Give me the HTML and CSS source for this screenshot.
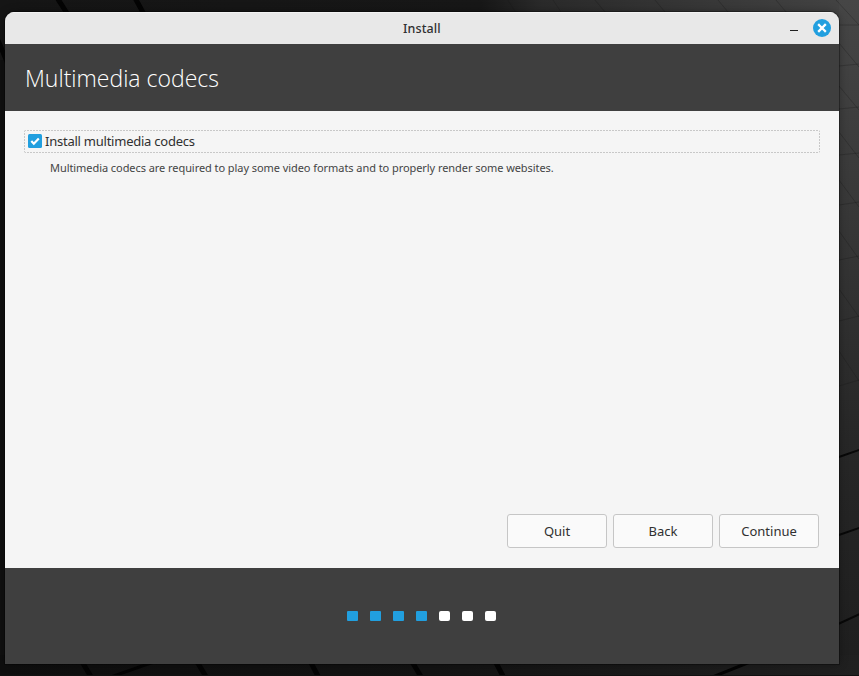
FILE: index.html
```
<!DOCTYPE html>
<html lang="en">
<head>
<meta charset="utf-8">
<title>Install</title>
<link rel="stylesheet" href="styles.css">
</head>
<body>
<svg class="wallpaper" viewBox="0 0 859 676" aria-hidden="true">
  <defs>
    <linearGradient id="top" x1="0" x2="1" y1="0" y2="0">
      <stop offset="0" stop-color="#151515"/><stop offset=".56" stop-color="#171717"/>
      <stop offset=".63" stop-color="#2a2a2a"/><stop offset="1" stop-color="#444"/>
    </linearGradient>
    <linearGradient id="side" x1="0" x2="0" y1="0" y2="1">
      <stop offset="0" stop-color="#464646"/><stop offset=".3" stop-color="#383838"/>
      <stop offset=".65" stop-color="#272727"/><stop offset="1" stop-color="#1e1e1e"/>
    </linearGradient>
    <linearGradient id="bottom" x1="0" x2="1" y1="0" y2="0">
      <stop offset="0" stop-color="#0e0e0e"/><stop offset=".5" stop-color="#131313"/><stop offset="1" stop-color="#202020"/>
    </linearGradient>
  </defs>
  <rect width="859" height="676" fill="#101010"/>
  <rect width="859" height="60" fill="url(#top)"/>
  <rect x="839" width="20" height="676" fill="url(#side)"/>
  <rect y="655" width="859" height="21" fill="url(#bottom)"/>
  <g stroke="#040404" stroke-width="5">
    <path d="M56 -4L70 18M134 -4L146 18M-3 38L8 64" />
    <path d="M78 655L93 680M193 655L208 680M307 655L320 680M408 655L423 680M492 655L505 680" />
    <path stroke-width="3" d="M108 678L165 658M710 678L760 658" />
  </g>
  <path d="M836 458L862 449M836 536L862 527M836 625L862 613" stroke="#080808" stroke-width="2"/>
  <path d="M839 25h20M839 66l20-2M839 109l20-2M839 155l20-2M839 205l20-3M839 260l20-4M839 321l20-5M839 386l20-6M839 43l20 24M839 86l20 24M839 132l20 26M839 180l20 27M839 231l20 28M839 289l20 28M839 351l20 30M836 0l23 25M776 0l10 12M718 0l10 12M655 0l10 12M595 0l10 12M553 0l8 12M505 -4l12 18" stroke="#161616" stroke-width=".8" opacity=".35" fill="none"/>
  <rect y="675" width="859" height="1" fill="#111"/>
</svg>
<main class="window">
  <header class="titlebar">
    <span class="titlebar-title">Install</span>
    <span class="minimize"></span>
    <svg class="close" viewBox="0 0 18 18"><circle cx="9" cy="9" r="9" fill="#219fdf"/><path d="M6 6l6 6M12 6l-6 6" stroke="#fff" stroke-width="2.3" stroke-linecap="square"/></svg>
  </header>
  <div class="heading"><h1>Multimedia codecs</h1></div>
  <section class="content">
    <div class="option">
      <svg class="check" viewBox="0 0 14 14"><rect width="14" height="14" rx="1.5" fill="#219fdf"/><path d="M3.3 7.1l2.5 2.6 5-5.2" fill="none" stroke="#fff" stroke-width="2.2"/></svg>
      <span class="option-label">Install multimedia codecs</span>
    </div>
    <p class="hint">Multimedia codecs are required to play some video formats and to properly render some websites.</p>
    <div class="actions">
      <button>Quit</button><button>Back</button><button>Continue</button>
    </div>
  </section>
  <footer class="steps">
    <i class="done"></i><i class="done"></i><i class="done"></i><i class="done"></i><i></i><i></i><i></i>
  </footer>
</main>
</body>
</html>
```
FILE: styles.css
```
* { box-sizing: border-box; }
body {
  margin: 0;
  width: 859px;
  height: 676px;
  padding: 12px 20px 12px 5px;
  overflow: hidden;
  background: #101010;
  color: #303030;
  font-family: "Noto Sans", "Open Sans", sans-serif;
  font-size: 13px;
}
.wallpaper { position: absolute; left: 0; top: 0; width: 859px; height: 676px; }
.window {
  position: relative;
  height: 652px;
  display: flex;
  flex-direction: column;
  border-radius: 9px 9px 0 0;
  overflow: hidden;
  box-shadow: 0 0 0 1px rgba(0,0,0,.3), 0 0 8px rgba(0,0,0,.35);
}
.titlebar {
  height: 32px;
  display: flex;
  align-items: center;
  padding-right: 8px;
  background: #e8e8e8;
  box-shadow: inset 0 1px #f3f3f3;
}
.titlebar-title {
  margin-left: 398px;
  padding-top: 1px;
  font-size: 12.5px;
  font-weight: 500;
  letter-spacing: .1px;
  line-height: 32px;
}
.minimize { width: 8px; height: 1px; margin: 5px 15px 0 auto; background: #202020; }
.close { width: 18px; height: 18px; }
.heading { height: 67px; padding-left: 20px; background: #3f3f3f; }
h1 {
  margin: 0;
  color: #fff;
  font-family: "Open Sans", sans-serif;
  font-size: 23px;
  font-weight: 300;
  line-height: 68px;
}
.content {
  height: 457px;
  padding: 19px 19px 20px;
  display: flex;
  flex-direction: column;
  background: #f5f5f5;
}
.option {
  height: 23px;
  padding: 0 4px;
  display: flex;
  align-items: center;
  gap: 3px;
  border-radius: 2px;
  background:
    repeating-linear-gradient(90deg, #c8c8c8 0 2px, transparent 2px 3px) top / 100% 1px no-repeat,
    repeating-linear-gradient(90deg, #c8c8c8 0 2px, transparent 2px 3px) bottom / 100% 1px no-repeat,
    repeating-linear-gradient(#c8c8c8 0 2px, transparent 2px 3px) left / 1px 100% no-repeat,
    repeating-linear-gradient(#c8c8c8 0 2px, transparent 2px 3px) right / 1px 100% no-repeat;
}
.check { width: 14px; height: 14px; margin-bottom: 1px; }
.option-label { line-height: 21px; letter-spacing: -.24px; white-space: nowrap; }
.hint {
  margin: 7px 0 0 26px;
  color: #444;
  font-size: 11px;
  letter-spacing: -.063px;
  line-height: 16px;
  white-space: nowrap;
}
.actions { margin-top: auto; display: flex; justify-content: flex-end; gap: 6px; padding-right: 1px; }
button {
  width: 100px;
  height: 34px;
  padding: 0;
  border: 1px solid #c6c6c6;
  border-radius: 3px;
  background: #fafafa;
  color: #303030;
  font: inherit;
}
.steps {
  flex: 1;
  display: flex;
  justify-content: center;
  align-items: center;
  gap: 12px;
  padding-right: 1px;
  background: #3f3f3f;
}
.steps i { width: 11px; height: 10px; border-radius: 2px; background: #fff; }
.steps .done { background: #219fdf; border-radius: 1px; }
```
